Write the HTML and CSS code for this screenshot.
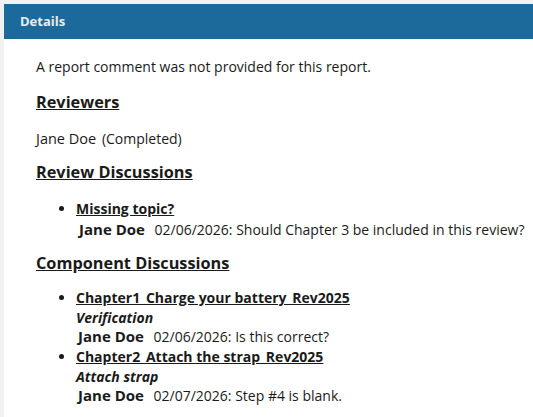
FILE: index.html
```html
<!DOCTYPE html>
<html lang="en">
<head>
  <meta charset="UTF-8" />
  <title>Details</title>
  <link rel="stylesheet" href="styles.css">
</head>
<body>
  <div class="panel">
    <div class="panel-header">Details</div>
    <div class="panel-body">
      <p class="comment">A report comment was not provided for this report.</p>

      <h3 class="section-title">Reviewers</h3>
      <p class="reviewer">Jane Doe <span class="status">(Completed)</span></p>

      <h3 class="section-title">Review Discussions</h3>
      <ul class="discussions">
        <li>
          <span class="topic">Missing topic?</span>
          <div class="entry"><span class="author">Jane Doe</span> <span class="msg">02/06/2026: Should Chapter 3 be included in this review?</span></div>
        </li>
      </ul>

      <h3 class="section-title">Component Discussions</h3>
      <ul class="discussions compact">
        <li>
          <span class="topic">Chapter1_Charge your battery_Rev2025</span>
          <div class="step">Verification</div>
          <div class="entry"><span class="author">Jane Doe</span> <span class="msg">02/06/2026: Is this correct?</span></div>
        </li>
        <li>
          <span class="topic">Chapter2_Attach the strap_Rev2025</span>
          <div class="step">Attach strap</div>
          <div class="entry"><span class="author">Jane Doe</span> <span class="msg">02/07/2026: Step #4 is blank.</span></div>
        </li>
      </ul>
    </div>
  </div>
</body>
</html>
```

FILE: styles.css
```css
:root {
  --header: #1b6a9b;
  --header-text: #e9ecef;
  --text: #1a1a1a;
  --page: #f1f1f1;
}

* {
  margin: 0;
  padding: 0;
  box-sizing: border-box;
}

html,
body {
  width: 100%;
  height: 100%;
  overflow: hidden;
  background: var(--page);
  font-family: 'Open Sans', 'Noto Sans', sans-serif;
  color: var(--text);
}

.panel {
  margin: 4px 0 0 4px;
  background: #ffffff;
  min-height: 100%;
}

.panel-header {
  background: var(--header);
  color: var(--header-text);
  font-weight: 700;
  font-size: 13px;
  height: 35px;
  line-height: 35px;
  padding-left: 16px;
}

.panel-body {
  padding: 18px 0 0 32px;
}

.comment {
  font-size: 14px;
  line-height: 20px;
  padding-bottom: 2px;
}

.section-title {
  font-size: 16.3px;
  font-weight: 700;
  text-decoration: underline;
  line-height: 22px;
  margin-top: 12px;
}

.reviewer {
  font-size: 14.5px;
  line-height: 20px;
  margin-top: 16px;
}

.status {
  font-size: 14px;
  margin-left: 2px;
}

.discussions {
  list-style: disc;
  padding-left: 40px;
  margin-top: 16px;
}

.discussions li {
  font-size: 14px;
  line-height: 20px;
}

.topic {
  font-weight: 700;
  text-decoration: underline;
}

.entry {
  line-height: 21px;
  padding-left: 3px;
}

.author {
  font-weight: 700;
  font-size: 15px;
  margin-right: 6px;
}

.step {
  font-weight: 700;
  font-style: italic;
}

.compact {
  margin-top: 14px;
}

.compact li + li {
  margin-top: 1px;
}

.compact .step {
  line-height: 19px;
}

.compact .entry {
  line-height: 19px;
  padding-left: 2px;
}
```
